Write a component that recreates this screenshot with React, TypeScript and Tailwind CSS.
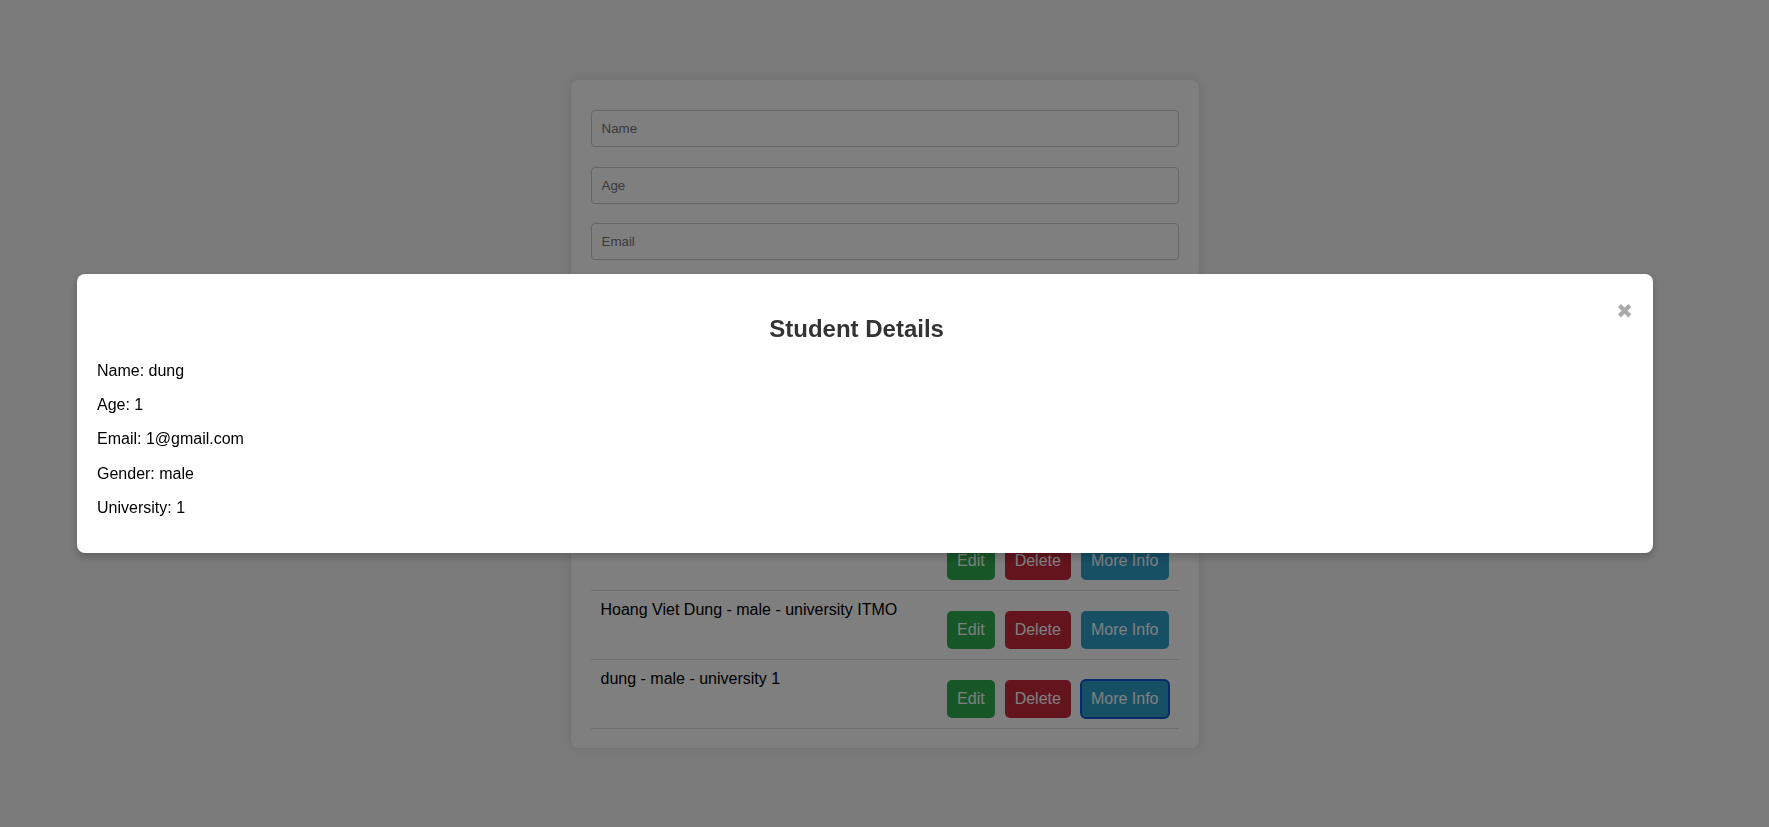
import React from "react";

const rows = [
  { text: "Nguyen Van An - male - university HUST", focus: false },
  { text: "Hoang Viet Dung - male - university ITMO", focus: false },
  { text: "dung - male - university 1", focus: true },
];

function Row({ text, focus }: { text: string; focus: boolean }) {
  return (
    <li className="flex h-[69px] items-start justify-between border-b border-[#dddddd] p-[10px]">
      <span className="text-[16px] leading-[18px] text-black">{text}</span>
      <div className="mt-[10px] flex gap-[10px]">
        <button className="h-[38px] rounded-[5px] bg-[#2eac4e] px-[10px] text-[16px] text-white">Edit</button>
        <button className="h-[38px] rounded-[5px] bg-[#c8283a] px-[10px] text-[16px] text-white">Delete</button>
        <button
          className={
            focus
              ? "h-[38px] rounded-[5px] bg-[#2e9fca] px-[10px] text-[16px] text-white outline-2 outline-offset-[-1px] outline-[#0b57d0]"
              : "h-[38px] rounded-[5px] bg-[#2e9fca] px-[10px] text-[16px] text-white"
          }
        >
          More Info
        </button>
      </div>
    </li>
  );
}

export default function App() {
  return (
    <div className="relative min-h-screen w-full bg-[#f4f4f4] pt-[80px] font-['Liberation_Sans',Arial,sans-serif]">
      <div className="mx-auto w-[628px] rounded-lg bg-white px-5 pt-5 pb-[19px] shadow-[0_0_10px_rgba(0,0,0,0.1)]">
        <div className="mt-[10px] flex flex-col gap-[19.5px]">
          {["Name", "Age", "Email", "Gender", "University"].map((p) => (
            <input
              key={p}
              placeholder={p}
              className="h-[37px] w-full rounded-[4px] border border-[#cccccc] px-[10px] text-[13.33px] text-black placeholder:text-[#757575]"
            />
          ))}
          <button className="h-[38px] w-full rounded-[5px] bg-[#007bff] text-[16px] text-white">Add Student</button>
        </div>
        <ul className="mt-[91px]">
          {rows.map((r) => (
            <Row key={r.text} text={r.text} focus={r.focus} />
          ))}
        </ul>
      </div>

      <div className="fixed inset-0 flex items-center bg-black/50">
        <div className="ml-[77px] w-[1576px] rounded-lg bg-white px-5 pt-5 pb-[19px] shadow-[0_4px_8px_rgba(0,0,0,0.2)]">
          <span className="float-right mt-[1px] font-['DejaVu_Sans',sans-serif] text-[20px] leading-[33px] font-bold text-[#aaaaaa]">
            ✖
          </span>
          <h2 className="mt-[21px] mb-[18.5px] text-center text-[24px] leading-[27.6px] font-bold text-[#333333]">
            Student Details
          </h2>
          <p className="my-4 text-[16px] leading-[18.4px] text-black">Name: dung</p>
          <p className="my-4 text-[16px] leading-[18.4px] text-black">Age: 1</p>
          <p className="my-4 text-[16px] leading-[18.4px] text-black">Email: 1@gmail.com</p>
          <p className="my-4 text-[16px] leading-[18.4px] text-black">Gender: male</p>
          <p className="my-4 text-[16px] leading-[18.4px] text-black">University: 1</p>
        </div>
      </div>
    </div>
  );
}
